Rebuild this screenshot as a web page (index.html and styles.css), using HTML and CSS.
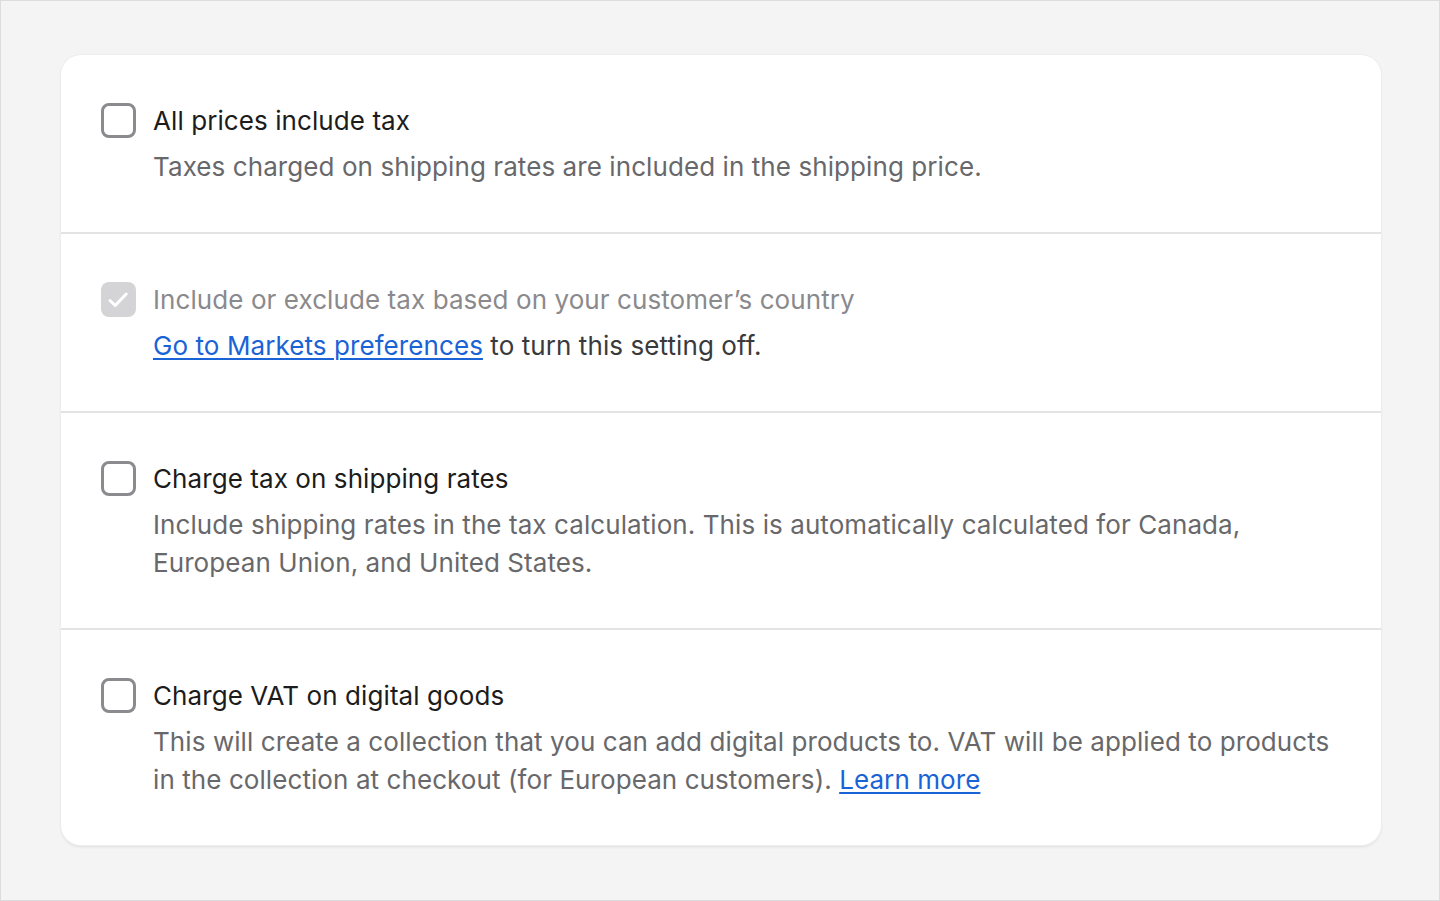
FILE: index.html
```html
<!DOCTYPE html>
<html lang="en">
<head>
<meta charset="utf-8">
<title>Tax settings</title>
<link rel="stylesheet" href="styles.css">
</head>
<body>
<div class="frame">
  <div class="card">
    <div class="row">
      <span class="box"></span>
      <div class="text">
        <div class="title">All prices include tax</div>
        <div class="desc">Taxes charged on shipping rates are included in the shipping price.</div>
      </div>
    </div>
    <div class="row">
      <span class="box box-checked">
        <svg class="check" viewBox="0 0 35 35" width="35" height="35"><path d="M9 18.5l5.2 5 11-11.5" fill="none" stroke="#fff" stroke-width="3" stroke-linecap="round" stroke-linejoin="round"/></svg>
      </span>
      <div class="text">
        <div class="title title-disabled">Include or exclude tax based on your customer’s country</div>
        <div class="desc desc-dark"><a class="link" href="#">Go to Markets preferences</a> to turn this setting off.</div>
      </div>
    </div>
    <div class="row">
      <span class="box"></span>
      <div class="text">
        <div class="title">Charge tax on shipping rates</div>
        <div class="desc">Include shipping rates in the tax calculation. This is automatically calculated for Canada, European Union, and United States.</div>
      </div>
    </div>
    <div class="row">
      <span class="box"></span>
      <div class="text">
        <div class="title">Charge VAT on digital goods</div>
        <div class="desc">This will create a collection that you can add digital products to. VAT will be applied to products in the collection at checkout (for European customers). <a class="link" href="#">Learn more</a></div>
      </div>
    </div>
  </div>
</div>
</body>
</html>
```

FILE: styles.css
```css
html, body {
  margin: 0;
  padding: 0;
}
body {
  font-family: Inter, "Noto Sans", "Liberation Sans", sans-serif;
  -webkit-font-smoothing: antialiased;
}
.frame {
  box-sizing: border-box;
  width: 1440px;
  height: 901px;
  border: 1px solid #dcdcde;
  background: #f4f4f5;
  padding: 54px 58px 0 60px;
}
.card {
  background: #fff;
  border-radius: 20px;
  box-shadow: 0 0 0 1px #ededed, 0 2px 3px rgba(0,0,0,0.09);
  overflow: hidden;
}
.row {
  display: flex;
  align-items: flex-start;
  gap: 17px;
  padding: 47px 40px 46px 40px;
  border-top: 2px solid #e3e3e3;
}
.row:first-child {
  border-top: none;
}
.box {
  box-sizing: border-box;
  flex: none;
  width: 35px;
  height: 35px;
  margin-top: 1px;
  border: 3px solid #8a8a8f;
  border-radius: 8px;
  position: relative;
}
.box-checked {
  border: none;
  background: #d4d4d6;
}
.check {
  display: block;
  width: 35px;
  height: 35px;
}
.text {
  display: flex;
  flex-direction: column;
  gap: 8px;
}
.title {
  font-size: 26px;
  line-height: 38px;
  color: #1c1c1c;
  letter-spacing: 0.08px;
}
.title-disabled {
  color: #8a8a8d;
}
.desc {
  font-size: 26px;
  line-height: 38px;
  color: #68686b;
  letter-spacing: 0.08px;
}
.desc-dark {
  color: #3a3a3c;
}
.link {
  color: #1a63d6;
  text-decoration: underline;
  text-underline-offset: 3px;
  text-decoration-thickness: 2px;
}
```
